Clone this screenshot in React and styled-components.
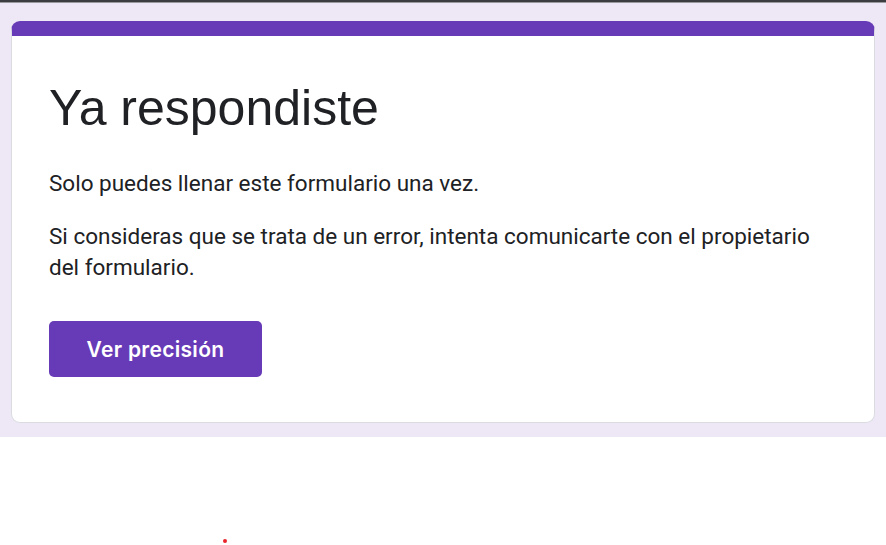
import React from 'react';
import styled, { createGlobalStyle } from 'styled-components';

const GlobalStyle = createGlobalStyle`
  html, body {
    margin: 0;
    padding: 0;
    background: #ffffff;
  }
  body {
    font-family: Roboto, "Liberation Sans", Arial, sans-serif;
  }
`;

const Page = styled.div`
  position: relative;
  width: 886px;
  height: 545px;
  overflow: hidden;
`;

const TopEdge = styled.div`
  height: 2px;
  background: #3c3d40;
  border-bottom: 1px solid #9a9a9e;
`;

const Backdrop = styled.section`
  background: #ede7f6;
  padding: 18px 11px 14px;
`;

const Card = styled.div`
  background: #ffffff;
  border: 1px solid #dadce0;
  border-top: 15px solid #673ab7;
  border-radius: 9px;
  padding: 42px 37px 45px;
`;

const Title = styled.h1`
  margin: 0 0 30px;
  font-family: "Liberation Sans", Arial, sans-serif;
  font-weight: 400;
  font-size: 50px;
  line-height: 60px;
  color: #202124;
`;

const Message = styled.p`
  margin: 0 0 22px;
  font-family: Roboto, sans-serif;
  font-size: 22.5px;
  line-height: 31px;
  color: #202124;

  &:last-of-type {
    margin-bottom: 38px;
  }
`;

const Button = styled.button`
  display: flex;
  align-items: center;
  justify-content: center;
  width: 213px;
  height: 56px;
  border: none;
  border-radius: 5px;
  background: #673ab7;
  color: #ffffff;
  font-family: Inter, "Open Sans", sans-serif;
  font-weight: 600;
  font-size: 21px;
  letter-spacing: 0.3px;
  cursor: pointer;
`;

const Dot = styled.span`
  position: absolute;
  left: 223px;
  top: 539px;
  width: 4px;
  height: 4px;
  border-radius: 50%;
  background: #e8232a;
`;

export default function App() {
  return (
    <Page>
      <GlobalStyle />
      <TopEdge />
      <Backdrop>
        <Card>
          <Title>Ya respondiste</Title>
          <Message>Solo puedes llenar este formulario una vez.</Message>
          <Message>
            Si consideras que se trata de un error, intenta comunicarte con el propietario del formulario.
          </Message>
          <Button>Ver precisión</Button>
        </Card>
      </Backdrop>
      <Dot />
    </Page>
  );
}
